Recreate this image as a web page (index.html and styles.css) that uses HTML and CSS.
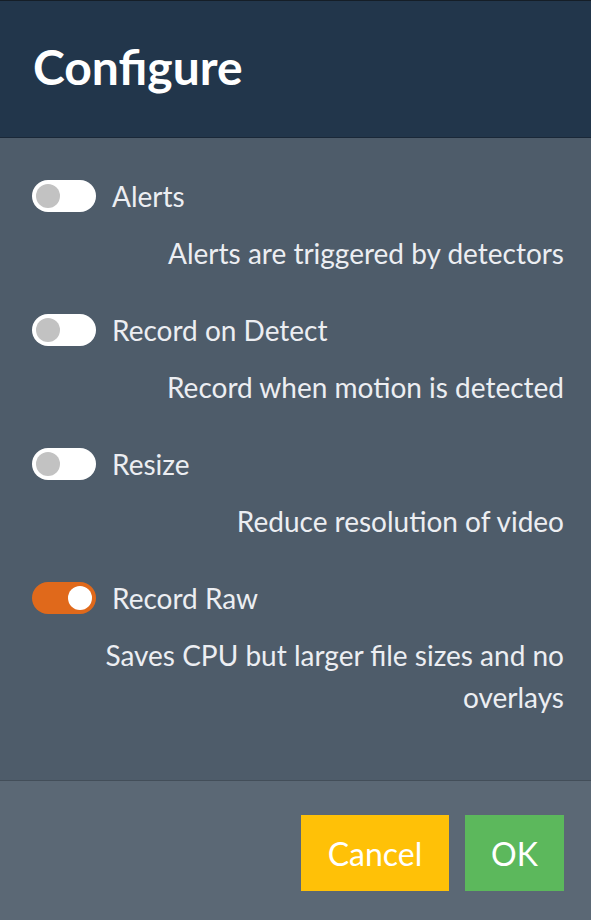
FILE: index.html
```html
<!DOCTYPE html>
<html>
<head>
<meta charset="utf-8">
<link rel="stylesheet" href="styles.css">
</head>
<body>
<div class="dialog">
  <header class="head"><h1 class="title">Configure</h1></header>
  <main class="content">
    <div class="option">
      <div class="option-row"><span class="toggle"><span class="knob"></span></span><span class="label">Alerts</span></div>
      <p class="desc">Alerts are triggered by detectors</p>
    </div>
    <div class="option">
      <div class="option-row"><span class="toggle"><span class="knob"></span></span><span class="label">Record on Detect</span></div>
      <p class="desc">Record when motion is detected</p>
    </div>
    <div class="option">
      <div class="option-row"><span class="toggle"><span class="knob"></span></span><span class="label">Resize</span></div>
      <p class="desc">Reduce resolution of video</p>
    </div>
    <div class="option">
      <div class="option-row"><span class="toggle on"><span class="knob"></span></span><span class="label">Record Raw</span></div>
      <p class="desc">Saves CPU but larger file sizes and no overlays</p>
    </div>
  </main>
  <footer class="foot">
    <button class="btn cancel">Cancel</button>
    <button class="btn ok">OK</button>
  </footer>
</div>
</body>
</html>
```
FILE: styles.css
```css
html, body { margin: 0; padding: 0; }
body {
  font-family: Lato, "Open Sans", sans-serif;
  background: #4e5c6a;
  width: 591px;
  height: 920px;
  overflow: hidden;
}
.dialog {
  display: flex;
  flex-direction: column;
  height: 920px;
}
.head {
  flex: none;
  background: #22364b;
  border-top: 1px solid #151e27;
  border-bottom: 1px solid #1a2838;
  height: 136px;
  display: flex;
  align-items: center;
  padding-left: 33px;
}
.title {
  margin: 0;
  color: #ffffff;
  font-weight: 700;
  font-size: 48px;
  line-height: 1;
  padding-bottom: 4px;
}
.content {
  flex: none;
  background: #4e5c6a;
  padding: 42px 27px 0 32px;
  display: flex;
  flex-direction: column;
  gap: 40px;
  height: 643px;
  box-sizing: border-box;
  border-bottom: 1px solid #434e59;
}
.option-row {
  display: flex;
  align-items: center;
  gap: 16px;
  height: 32px;
}
.toggle {
  width: 64px;
  height: 32px;
  border-radius: 16px;
  background: #ffffff;
  position: relative;
  flex: none;
}
.knob {
  position: absolute;
  top: 4px;
  left: 4px;
  width: 24px;
  height: 24px;
  border-radius: 50%;
  background: #c2c2c2;
}
.toggle.on { background: #e0691b; }
.toggle.on .knob { left: 36px; background: #ffffff; }
.label {
  color: #eceef2;
  font-size: 28px;
  line-height: 32px;
}
.desc {
  margin: 20px 0 0 72px;
  color: #eceef2;
  font-size: 28px;
  line-height: 42px;
  text-align: right;
}
.foot {
  flex: 1;
  background: #5b6875;
  display: flex;
  justify-content: flex-end;
  align-items: flex-start;
  gap: 16px;
  padding: 34px 27px 0 0;
}
.btn {
  border: none;
  border-radius: 0;
  height: 76px;
  padding: 0;
  font-family: Lato, "Open Sans", sans-serif;
  font-size: 32px;
  color: #ffffff;
  cursor: pointer;
}
.cancel { background: #ffc107; width: 148px; }
.ok { background: #5cb85c; width: 99px; }
```
